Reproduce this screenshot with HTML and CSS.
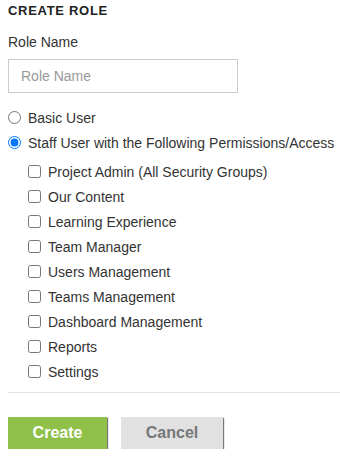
FILE: index.html
```html
<!DOCTYPE html>
<html>
<head>
<meta charset="utf-8">
<link rel="stylesheet" href="styles.css">
</head>
<body>
<div class="page">
  <h3 class="title">CREATE ROLE</h3>
  <label class="field-label" for="rn">Role Name</label>
  <input id="rn" class="text-input" type="text" placeholder="Role Name">
  <div class="radios">
    <label class="opt"><input type="radio" name="t"> <span>Basic User</span></label>
    <label class="opt"><input type="radio" name="t" checked> <span>Staff User with the Following Permissions/Access</span></label>
  </div>
  <div class="perms">
    <label class="opt"><input type="checkbox"> <span>Project Admin (All Security Groups)</span></label>
    <label class="opt"><input type="checkbox"> <span>Our Content</span></label>
    <label class="opt"><input type="checkbox"> <span>Learning Experience</span></label>
    <label class="opt"><input type="checkbox"> <span>Team Manager</span></label>
    <label class="opt"><input type="checkbox"> <span>Users Management</span></label>
    <label class="opt"><input type="checkbox"> <span>Teams Management</span></label>
    <label class="opt"><input type="checkbox"> <span>Dashboard Management</span></label>
    <label class="opt"><input type="checkbox"> <span>Reports</span></label>
    <label class="opt"><input type="checkbox"> <span>Settings</span></label>
  </div>
  <div class="divider"></div>
  <div class="actions">
    <button class="btn btn-create">Create</button>
    <button class="btn btn-cancel">Cancel</button>
  </div>
</div>
</body>
</html>
```
FILE: styles.css
```css
html, body {
  margin: 0;
  padding: 0;
  background: #fff;
}
body {
  font-family: "Liberation Sans", Arial, sans-serif;
  font-size: 14px;
  color: #333;
}
.page {
  padding: 0 0 0 8px;
}
.title {
  margin: 0;
  padding-top: 3px;
  font-size: 13px;
  font-weight: bold;
  letter-spacing: 0.7px;
  color: #222;
  line-height: 16px;
}
.field-label {
  display: block;
  margin-top: 15px;
  line-height: 16px;
}
.text-input {
  display: block;
  box-sizing: border-box;
  margin-top: 9px;
  width: 230px;
  height: 34px;
  border: 1px solid #ccc;
  border-radius: 0;
  padding: 0 12px;
  font-family: "Liberation Sans", Arial, sans-serif;
  font-size: 14px;
  color: #333;
  outline: none;
}
.text-input::placeholder {
  color: #999;
}
.radios {
  display: flex;
  flex-direction: column;
  margin-top: 12px;
}
.opt {
  display: flex;
  align-items: center;
  height: 25px;
  line-height: 16px;
  color: #333;
}
.opt input {
  margin: 0 7px 0 0;
  width: 13px;
  height: 13px;
}
.perms {
  display: flex;
  flex-direction: column;
  margin-top: 4px;
  padding-left: 20px;
}
.divider {
  margin-top: 8px;
  height: 1px;
  background: #e5e5e5;
}
.actions {
  display: flex;
  gap: 14px;
  margin-top: 24px;
}
.btn {
  height: 32px;
  border: none;
  border-radius: 0;
  font-family: "Liberation Sans", Arial, sans-serif;
  font-size: 16px;
  font-weight: bold;
  padding: 0;
  cursor: pointer;
}
.btn-create {
  width: 99px;
  background: #8fc04a;
  color: #fff;
  box-shadow: 1px 1px 1px #777;
}
.btn-cancel {
  width: 102px;
  background: #e1e1e1;
  color: #777;
  box-shadow: 1px 1px 1px #777;
}
```
